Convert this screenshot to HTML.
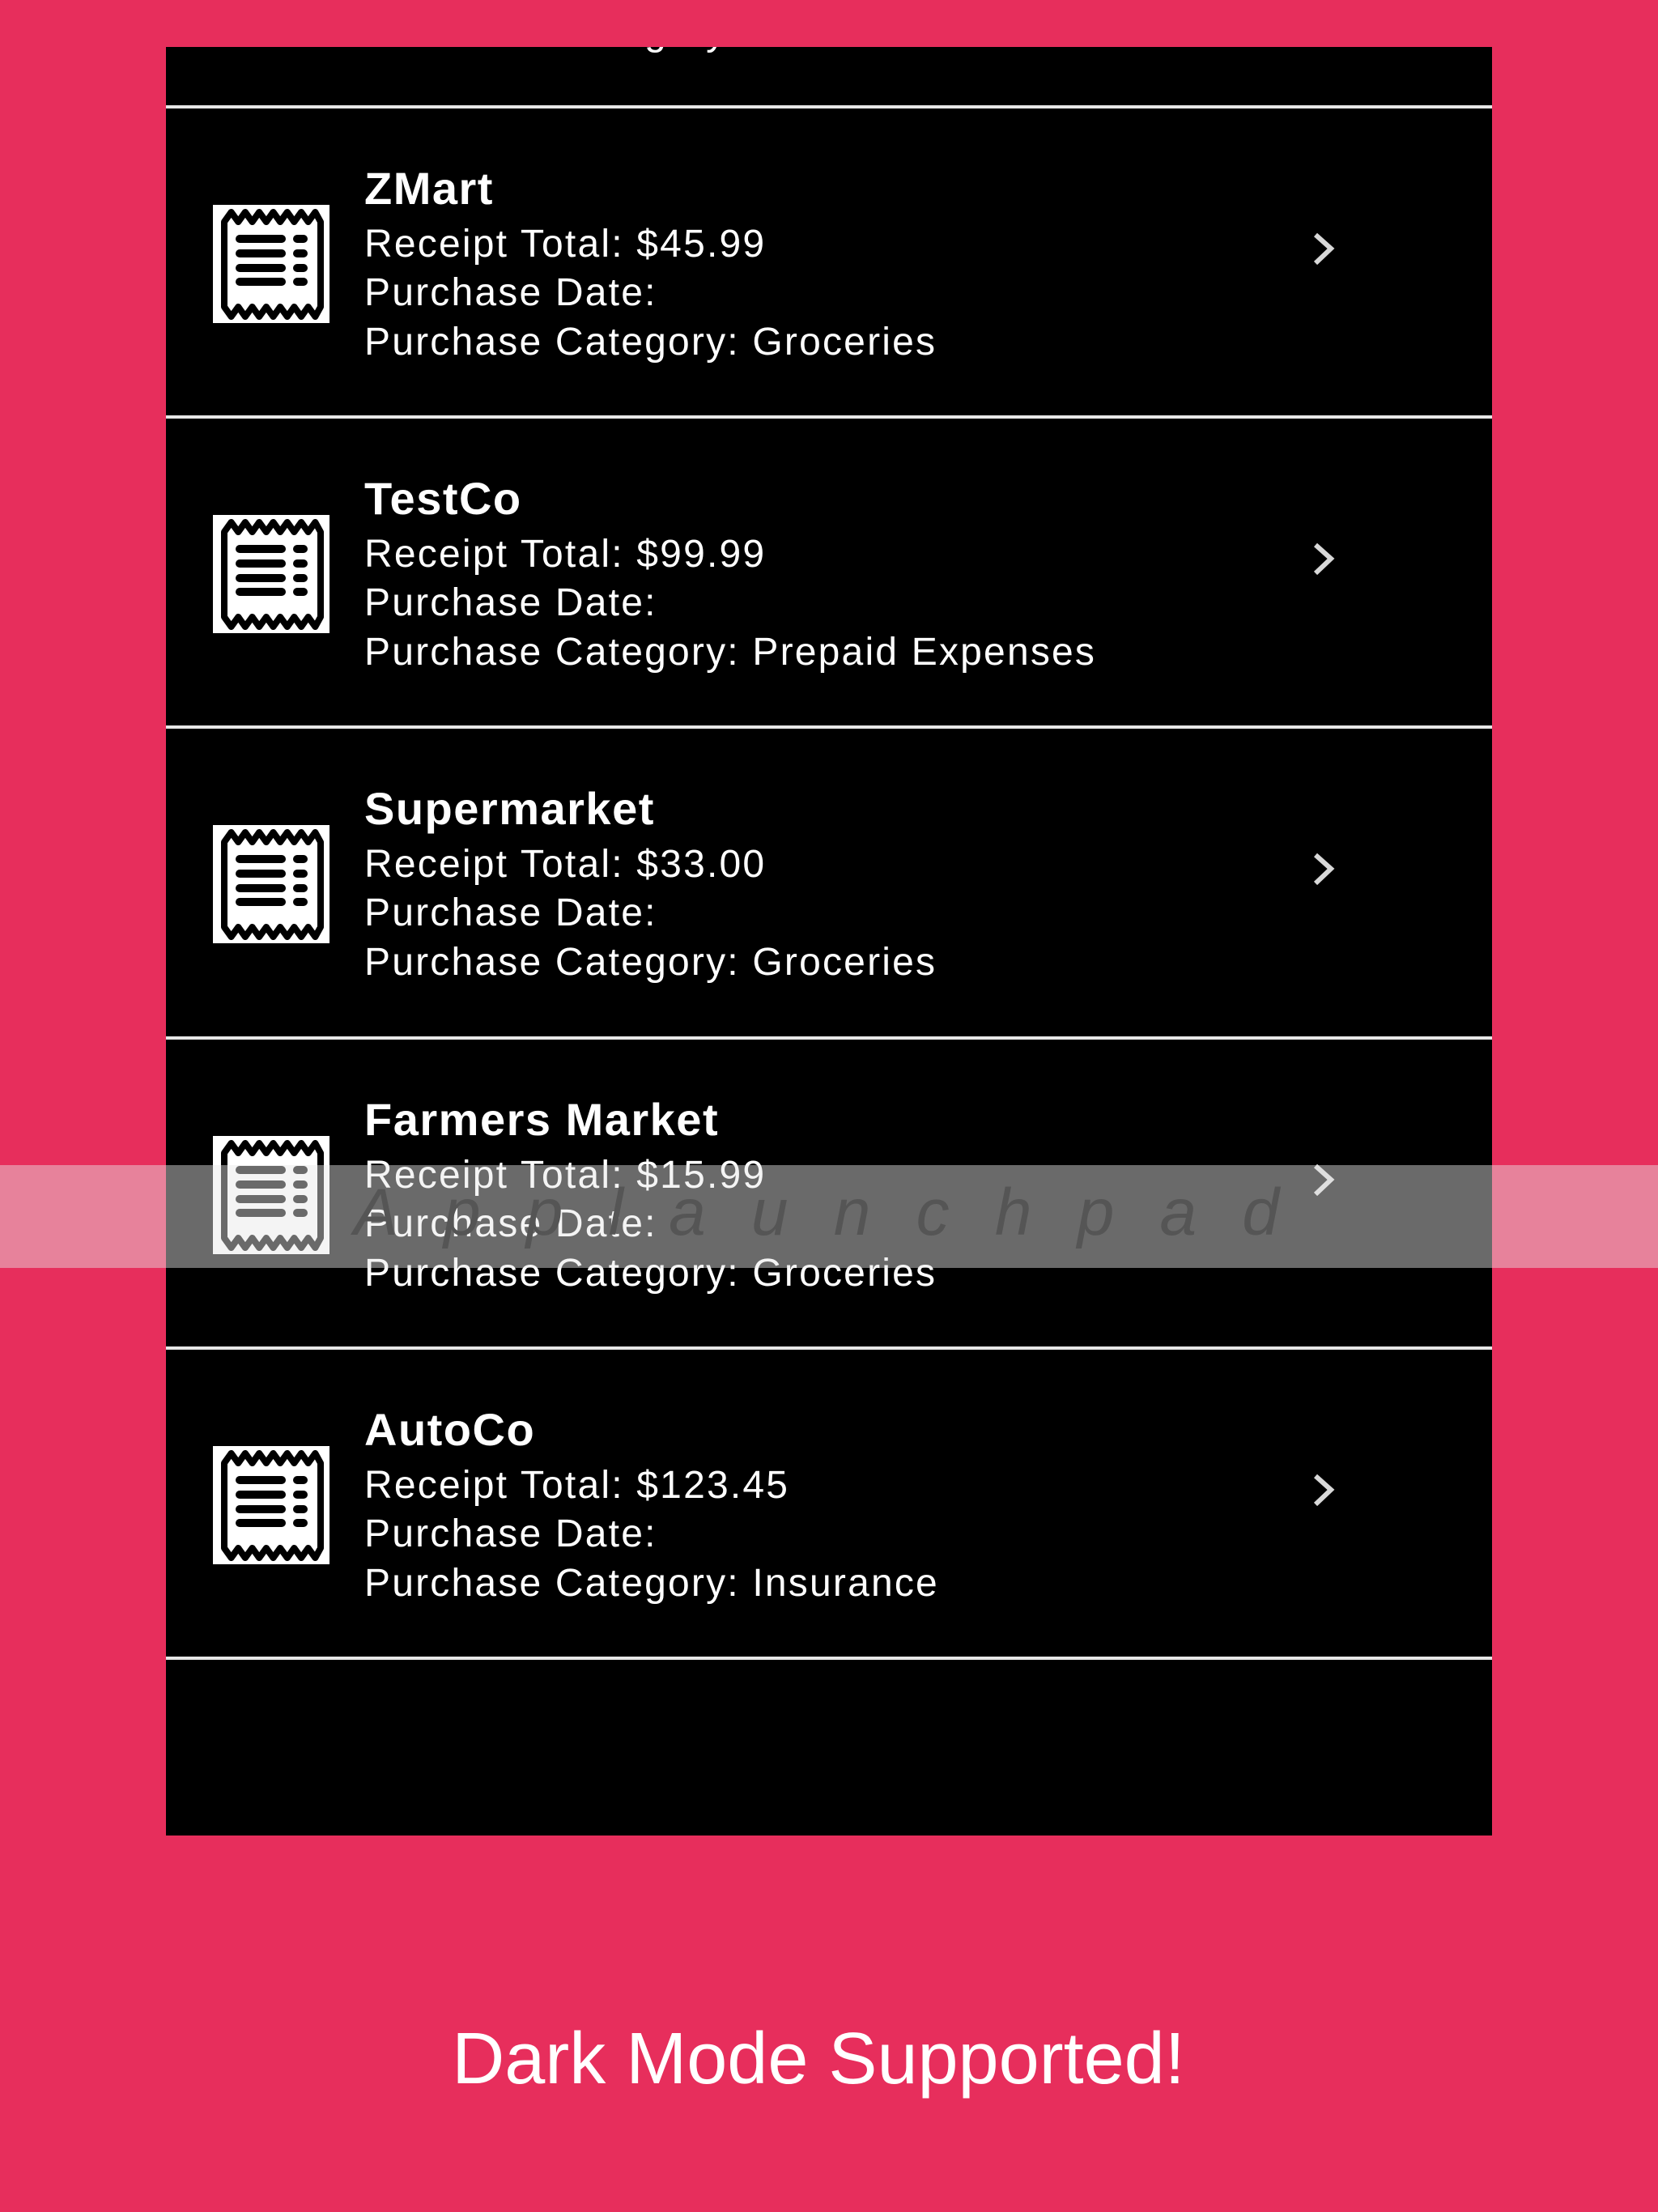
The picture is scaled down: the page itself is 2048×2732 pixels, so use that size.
<!DOCTYPE html>
<html><head><meta charset="utf-8"><style>
html,body{margin:0;padding:0;background:#e72e5c;}
svg{display:block}
</style></head><body>
<svg width="2048" height="2732" viewBox="0 0 2048 2732" xmlns="http://www.w3.org/2000/svg">
<defs>
<g id="ic">
<rect x="0" y="0" width="144" height="146" fill="#fff"/>
<path d="M14,21 L14,126 L22.6,138 L31.3,126 L39.9,138 L48.6,126 L57.2,138 L65.9,126 L74.5,138 L83.1,126 L91.8,138 L100.4,126 L109.1,138 L117.7,126 L126.4,138 L133,126 L133,21 L126.4,9 L117.7,21 L109.1,9 L100.4,21 L91.8,9 L83.1,21 L74.5,9 L65.9,21 L57.2,9 L48.6,21 L39.9,9 L31.3,21 L22.6,9 Z" fill="#fff" stroke="#000" stroke-width="8" stroke-linejoin="round"/>
<g stroke="#000" stroke-width="10" stroke-linecap="round">
<line x1="33" y1="42" x2="85" y2="42"/><line x1="104" y1="42" x2="112" y2="42"/>
<line x1="33" y1="60" x2="85" y2="60"/><line x1="104" y1="60" x2="112" y2="60"/>
<line x1="33" y1="78" x2="85" y2="78"/><line x1="104" y1="78" x2="112" y2="78"/>
<line x1="33" y1="95" x2="85" y2="95"/><line x1="104" y1="95" x2="112" y2="95"/>
</g>
</g>
<clipPath id="cp"><rect x="205" y="58" width="1638" height="2209"/></clipPath>
</defs>
<rect width="2048" height="2732" fill="#e72e5c"/>
<rect x="205" y="58" width="1638" height="2209" fill="#000"/>
<g clip-path="url(#cp)" font-family="Liberation Sans, sans-serif" fill="#fff">
<g transform="translate(0,-251)">
<text x="450" y="306" font-size="48" letter-spacing="2.2">Purchase Category: Groceries</text>
</g>
<g transform="translate(0,132)">
<rect x="205" y="-2" width="1638" height="4" fill="#e6e6e6"/>
<use href="#ic" x="263" y="121"/>
<text x="450" y="120" font-size="56" font-weight="bold" letter-spacing="1.5">ZMart</text>
<text x="450" y="185" font-size="48" letter-spacing="2.2">Receipt Total: $45.99</text>
<text x="450" y="245" font-size="48" letter-spacing="2.2">Purchase Date:</text>
<text x="450" y="306" font-size="48" letter-spacing="2.2">Purchase Category: Groceries</text>
<polyline points="1625,158 1644,175 1625,193" fill="none" stroke="#d8d8d8" stroke-width="6"/>
</g>
<g transform="translate(0,515)">
<rect x="205" y="-2" width="1638" height="4" fill="#e6e6e6"/>
<use href="#ic" x="263" y="121"/>
<text x="450" y="120" font-size="56" font-weight="bold" letter-spacing="1.5">TestCo</text>
<text x="450" y="185" font-size="48" letter-spacing="2.2">Receipt Total: $99.99</text>
<text x="450" y="245" font-size="48" letter-spacing="2.2">Purchase Date:</text>
<text x="450" y="306" font-size="48" letter-spacing="2.2">Purchase Category: Prepaid Expenses</text>
<polyline points="1625,158 1644,175 1625,193" fill="none" stroke="#d8d8d8" stroke-width="6"/>
</g>
<g transform="translate(0,898)">
<rect x="205" y="-2" width="1638" height="4" fill="#e6e6e6"/>
<use href="#ic" x="263" y="121"/>
<text x="450" y="120" font-size="56" font-weight="bold" letter-spacing="1.5">Supermarket</text>
<text x="450" y="185" font-size="48" letter-spacing="2.2">Receipt Total: $33.00</text>
<text x="450" y="245" font-size="48" letter-spacing="2.2">Purchase Date:</text>
<text x="450" y="306" font-size="48" letter-spacing="2.2">Purchase Category: Groceries</text>
<polyline points="1625,158 1644,175 1625,193" fill="none" stroke="#d8d8d8" stroke-width="6"/>
</g>
<g transform="translate(0,1282)">
<rect x="205" y="-2" width="1638" height="4" fill="#e6e6e6"/>
<use href="#ic" x="263" y="121"/>
<text x="450" y="120" font-size="56" font-weight="bold" letter-spacing="1.5">Farmers Market</text>
<text x="450" y="185" font-size="48" letter-spacing="2.2">Receipt Total: $15.99</text>
<text x="450" y="245" font-size="48" letter-spacing="2.2">Purchase Date:</text>
<text x="450" y="306" font-size="48" letter-spacing="2.2">Purchase Category: Groceries</text>
<polyline points="1625,158 1644,175 1625,193" fill="none" stroke="#d8d8d8" stroke-width="6"/>
</g>
<g transform="translate(0,1665)">
<rect x="205" y="-2" width="1638" height="4" fill="#e6e6e6"/>
<use href="#ic" x="263" y="121"/>
<text x="450" y="120" font-size="56" font-weight="bold" letter-spacing="1.5">AutoCo</text>
<text x="450" y="185" font-size="48" letter-spacing="2.2">Receipt Total: $123.45</text>
<text x="450" y="245" font-size="48" letter-spacing="2.2">Purchase Date:</text>
<text x="450" y="306" font-size="48" letter-spacing="2.2">Purchase Category: Insurance</text>
<polyline points="1625,158 1644,175 1625,193" fill="none" stroke="#d8d8d8" stroke-width="6"/>
</g>
<rect x="205" y="2046" width="1638" height="4" fill="#e6e6e6"/>
</g>
<rect x="0" y="1439" width="2048" height="127" fill="rgb(232,232,232)" fill-opacity="0.46"/>
<text x="437" y="1525" font-family="Liberation Sans, sans-serif" font-style="italic" font-size="82" fill="#555" textLength="1143" lengthAdjust="spacing">Applaunchpad</text>
<text x="1011" y="2573" text-anchor="middle" font-family="Liberation Sans, sans-serif" font-size="90" fill="#fff">Dark Mode Supported!</text>
</svg>
</body></html>
